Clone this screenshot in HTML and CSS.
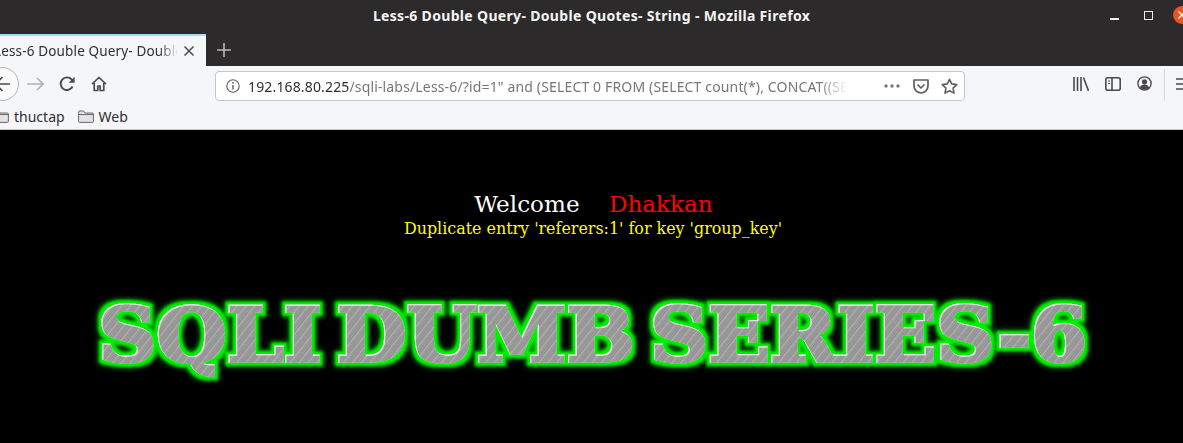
FILE: index.html
```html
<!DOCTYPE html>
<html lang="en">
<head>
  <meta charset="UTF-8" />
  <title>Less-6 Double Query- Double Quotes- String</title>
  <link rel="stylesheet" href="styles.css">
</head>
<body>
  <header class="titlebar">
    <span class="window-title">Less-6 Double Query- Double Quotes- String - Mozilla Firefox</span>
    <div class="window-buttons">
      <span class="win-min"></span>
      <span class="win-max"></span>
      <span class="win-close">
        <svg width="18" height="18" viewBox="0 0 18 18"><path d="M5.5 5.5l7 7M12.5 5.500l-7 7" stroke="#fff" stroke-width="1.4" fill="none"/></svg>
      </span>
    </div>
  </header>

  <div class="tabbar">
    <div class="tab">
      <span class="tab-label">Less-6 Double Query- Double Quotes- String</span>
      <svg class="tab-close" width="12" height="12" viewBox="0 0 12 12"><path d="M1.5 1.5l9 9M10.5 1.5l-9 9" stroke="#4a4a4f" stroke-width="1.5" fill="none"/></svg>
    </div>
    <svg class="new-tab" width="14" height="14" viewBox="0 0 14 14"><path d="M7 0v14M0 7h14" stroke="#b8b8b8" stroke-width="1.6" fill="none"/></svg>
  </div>

  <nav class="toolbar">
    <div class="back-btn">
      <svg width="16" height="16" viewBox="0 0 16 16"><path d="M8.500 1L1.500 8l7 7M2 8h14" stroke="#4a4a4f" stroke-width="1.6" fill="none"/></svg>
    </div>
    <svg class="nav-icon forward" width="17" height="14" viewBox="0 0 17 14"><path d="M10 1l6 6-6 6M16 7H0" stroke="#b1b1b3" stroke-width="1.6" fill="none"/></svg>
    <svg class="nav-icon reload" width="16" height="16" viewBox="0 0 16 16"><path d="M13.600 10.500A6.300 6.300 0 1 1 12.600 3.400L14.600 5.400" stroke="#4a4a4f" stroke-width="1.9" fill="none"/><path d="M15.600 0.800v6h-6z" fill="#4a4a4f"/></svg>
    <svg class="nav-icon home" width="16" height="16" viewBox="0 0 16 16"><path d="M1 8l7-6.500L15 8M3.200 7v7.500h3.600V10h2.400v4.500h3.600V7" stroke="#4a4a4f" stroke-width="1.700" fill="none" stroke-linejoin="round"/></svg>

    <div class="urlbar">
      <svg class="url-info" width="14" height="14" viewBox="0 0 14 14"><circle cx="7" cy="7" r="6.200" stroke="#5f5f62" stroke-width="1.100" fill="none"/><path d="M7 6v4.400" stroke="#5f5f62" stroke-width="1.400"/><circle cx="7" cy="3.900" r="0.900" fill="#5f5f62"/></svg>
      <div class="url-text"><span class="url-host">192.168.80.225</span>/sqli-labs/Less-6/?id=1" and (SELECT 0 FROM (SELECT count(*), CONCAT((SELECT table_name FROM information_schema.tables</div>
      <svg class="url-dots" width="16" height="4" viewBox="0 0 16 4"><circle cx="2" cy="2" r="1.700" fill="#77777a"/><circle cx="8" cy="2" r="1.700" fill="#77777a"/><circle cx="14" cy="2" r="1.700" fill="#77777a"/></svg>
      <svg class="url-pocket" width="16" height="15" viewBox="0 0 16 15"><path d="M1 1h14v6a7 7 0 0 1-14 0zM4.500 5.500L8 9l3.500-3.500" stroke="#5f5f62" stroke-width="1.700" fill="none" stroke-linejoin="round"/></svg>
      <svg class="url-star" width="17" height="16" viewBox="0 0 17 16"><path d="M8.500 1.300l2.200 4.600 5 .7-3.600 3.500.9 5-4.500-2.400-4.500 2.400.9-5L1.300 6.600l5-.7z" stroke="#5f5f62" stroke-width="1.600" fill="none" stroke-linejoin="round"/></svg>
    </div>

    <div class="tool-icons">
      <svg width="16" height="14" viewBox="0 0 16 14"><path d="M1 0v14M4.500 0v14M8 0v14M10.500 0.500l5 13.500" stroke="#4a4a4f" stroke-width="1.600" fill="none"/></svg>
      <svg width="16" height="14" viewBox="0 0 16 14"><rect x="0.800" y="0.800" width="14.400" height="12.400" rx="2" stroke="#4a4a4f" stroke-width="1.600" fill="none"/><path d="M7 1v12" stroke="#4a4a4f" stroke-width="1.600"/><path d="M3 4h2M3 6.500h2" stroke="#4a4a4f" stroke-width="1.200"/></svg>
      <svg width="15" height="15" viewBox="0 0 15 15"><circle cx="7.500" cy="7.500" r="6.600" stroke="#4a4a4f" stroke-width="1.400" fill="none"/><circle cx="7.500" cy="5.800" r="2.600" fill="#4a4a4f"/><path d="M2.800 11.500c1-2.200 2.800-3 4.700-3s3.700.8 4.700 3c-1.200 1.400-2.800 2.200-4.700 2.200s-3.500-.8-4.700-2.200z" fill="#4a4a4f"/></svg>
      <span class="tool-sep"></span>
      <svg width="16" height="12" viewBox="0 0 16 12"><path d="M0 1h16M0 6h16M0 11h16" stroke="#4a4a4f" stroke-width="1.700"/></svg>
    </div>
  </nav>

  <div class="bookmarks">
    <div class="bookmark first">
      <svg width="16" height="13" viewBox="0 0 16 13"><path d="M.6 2a1 1 0 0 1 1-1h4l1.500 2h7.300a1 1 0 0 1 1 1v7.400a1 1 0 0 1-1 1h-12.800a1 1 0 0 1-1-1z" stroke="#6a6a6d" fill="#e3e3e5"/><path d="M.6 4.500h14.800" stroke="#6a6a6d"/></svg>
      <span>thuctap</span>
    </div>
    <div class="bookmark">
      <svg width="16" height="13" viewBox="0 0 16 13"><path d="M.6 2a1 1 0 0 1 1-1h4l1.500 2h7.300a1 1 0 0 1 1 1v7.400a1 1 0 0 1-1 1h-12.800a1 1 0 0 1-1-1z" stroke="#6a6a6d" fill="#e3e3e5"/><path d="M.6 4.500h14.800" stroke="#6a6a6d"/></svg>
      <span>Web</span>
    </div>
  </div>

  <main class="page">
    <div class="welcome">Welcome&nbsp;&nbsp;&nbsp;&nbsp;<span class="name">Dhakkan</span></div>
    <div class="message">Duplicate entry 'referers:1' for key 'group_key'</div>

    <svg class="logo" width="1183" height="110" viewBox="0 0 1183 110">
      <defs>
        <pattern id="brushed" width="7" height="7" patternUnits="userSpaceOnUse" patternTransform="rotate(-52)">
          <rect width="7" height="7" fill="#a0a0a0"/>
          <rect y="0" width="7" height="1" fill="#909090"/>
          <rect y="2" width="7" height="1" fill="#aeaeae"/>
          <rect y="3" width="7" height="1" fill="#969696"/>
          <rect y="5" width="7" height="1" fill="#8e8e8e"/>
        </pattern>
        <filter id="glow" x="-5%" y="-40%" width="110%" height="180%">
          <feMorphology in="SourceAlpha" operator="dilate" radius="4" result="fat"/>
          <feGaussianBlur in="fat" stdDeviation="2.500" result="fatBlur"/>
          <feFlood flood-color="#00a000"/>
          <feComposite in2="fatBlur" operator="in" result="outer"/>
          <feMorphology in="SourceAlpha" operator="dilate" radius="3" result="mid"/>
          <feGaussianBlur in="mid" stdDeviation="0.800" result="midBlur"/>
          <feFlood flood-color="#00f000"/>
          <feComposite in2="midBlur" operator="in" result="inner"/>
          <feOffset in="SourceAlpha" dx="1" dy="1" result="moved"/>
          <feFlood flood-color="#f4f4f4"/>
          <feComposite in2="SourceAlpha" operator="in" result="whiteFill"/>
          <feComposite in="whiteFill" in2="moved" operator="out" result="edge"/>
          <feMerge>
            <feMergeNode in="outer"/>
            <feMergeNode in="inner"/>
            <feMergeNode in="SourceGraphic"/>
            <feMergeNode in="edge"/>
          </feMerge>
        </filter>
      </defs>
      <text class="logo-text" x="98" y="74" textLength="989" lengthAdjust="spacingAndGlyphs" fill="url(#brushed)" stroke="url(#brushed)" filter="url(#glow)">SQLI DUMB SERIES-6</text>
    </svg>
  </main>
</body>
</html>
```

FILE: styles.css
```css
* {
  box-sizing: border-box;
}

html, body {
  margin: 0;
  height: 443px;
  overflow: hidden;
}

body {
  width: 1183px;
  background-color: #000;
  font-family: "Noto Sans", sans-serif;
}

svg {
  display: block;
  flex: none;
}

.titlebar {
  height: 34px;
  padding-bottom: 4px;
  background-color: #2c2a2b;
  display: flex;
  align-items: center;
  justify-content: center;
  position: relative;
}

.window-title {
  color: #f5f5f5;
  font-size: 14px;
  font-weight: bold;
  letter-spacing: 0.33px;
}

.window-buttons {
  position: absolute;
  top: 6px;
  left: 1110px;
  display: flex;
  align-items: center;
  height: 18px;
}

.win-min {
  width: 9px;
  height: 2px;
  margin-top: 7px;
  background-color: #eee;
}

.win-max {
  width: 9px;
  height: 9px;
  margin-left: 25px;
  border: 1px solid #eee;
}

.win-close {
  width: 18px;
  height: 18px;
  margin-left: 20px;
  flex: none;
  border-radius: 50%;
  background-color: #e95420;
}

.tabbar {
  height: 32px;
  background-color: #2c2a2b;
  display: flex;
  align-items: center;
}

.tab {
  width: 206px;
  height: 32px;
  background-color: #f5f6f8;
  border-top: 2px solid #a5dcf5;
  display: flex;
  align-items: center;
  overflow: hidden;
}

.tab-label {
  width: 184px;
  margin-left: -6px;
  flex: none;
  white-space: nowrap;
  overflow: hidden;
  font-size: 13.5px;
  letter-spacing: 0.15px;
  color: #2f2f33;
  -webkit-mask-image: linear-gradient(to right, #000 165px, transparent 184px);
  mask-image: linear-gradient(to right, #000 165px, transparent 184px);
}

.tab-close {
  margin-left: 5px;
}

.new-tab {
  margin-left: 11px;
}

.toolbar {
  height: 35px;
  background-color: #f5f6f8;
  display: flex;
  align-items: center;
  position: relative;
}

.back-btn {
  width: 34px;
  height: 34px;
  margin-left: -15px;
  border: 1px solid #b4b4b6;
  border-radius: 50%;
  background-color: #fafafb;
  display: flex;
  align-items: center;
  justify-content: center;
}

.nav-icon.forward {
  margin-left: 8px;
}

.nav-icon.reload {
  margin-left: 15px;
}

.nav-icon.home {
  margin-left: 16px;
}

.urlbar {
  width: 750px;
  height: 30px;
  position: absolute;
  left: 215px;
  top: 5px;
  background-color: #fff;
  border: 1px solid #c5c6cb;
  border-radius: 4px;
  display: flex;
  align-items: center;
  padding-left: 10px;
}

.url-text {
  width: 608px;
  margin-left: 8px;
  flex: none;
  white-space: nowrap;
  overflow: hidden;
  font-size: 14px;
  letter-spacing: 0.15px;
  color: #77777a;
  -webkit-mask-image: linear-gradient(to right, #000 570px, transparent 600px);
  mask-image: linear-gradient(to right, #000 570px, transparent 600px);
}

.url-host {
  color: #2f2f33;
}

.url-dots {
  margin-left: 28px;
}

.url-pocket {
  margin-left: 13px;
}

.url-star {
  margin-left: 12px;
}

.tool-icons {
  position: absolute;
  left: 1073px;
  top: 0;
  height: 35px;
  display: flex;
  align-items: center;
  gap: 16px;
}

.tool-sep {
  width: 1px;
  height: 32px;
  margin: 2px -5px 0 -4px;
  background-color: #d8d9dc;
}

.bookmarks {
  height: 29px;
  padding-top: 2px;
  background-color: #f5f6f8;
  border-bottom: 1px solid #c9cace;
  display: flex;
  align-items: center;
  font-size: 14px;
  color: #2f2f33;
}

.bookmark {
  display: flex;
  align-items: center;
  gap: 5px;
  margin-left: 13px;
}

.bookmark.first {
  margin-left: -7px;
}

.page {
  height: 313px;
  background-color: #000;
  padding-top: 60px;
  font-family: "DejaVu Serif", serif;
  text-align: center;
}

.welcome {
  font-size: 23.1px;
  line-height: 29px;
  padding-left: 4px;
  color: #fff;
}

.name {
  color: #f00;
}

.message {
  font-size: 15.9px;
  line-height: 19px;
  padding-left: 3px;
  color: #ff0;
}

.logo {
  margin-top: 49px;
}

.logo-text {
  font-family: "DejaVu Serif", serif;
  font-weight: bold;
  font-size: 75px;
  stroke-width: 3.5px;
  word-spacing: -12px;
}
```
